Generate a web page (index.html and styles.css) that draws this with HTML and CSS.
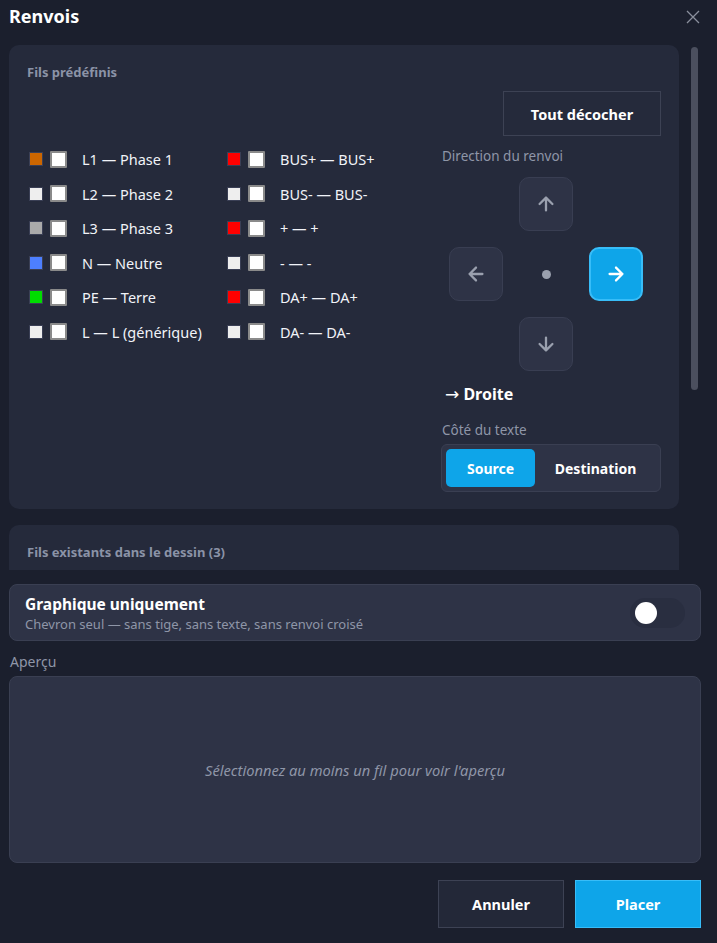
FILE: index.html
```html
<!DOCTYPE html>
<html lang="fr">
<head>
    <meta charset="UTF-8">
    <meta name="viewport" content="width=device-width, initial-scale=1.0">
    <title>Renvois</title>
    <link rel="stylesheet" href="styles.css">
</head>
<body>
    <div class="dialog">
        <header class="dialog-header">
            <h1>Renvois</h1>
            <button class="close-button" title="Fermer">
                <svg width="16" height="16" viewBox="0 0 16 16"><path d="M2 2 L14 14 M14 2 L2 14" stroke="currentColor" stroke-width="1.3" fill="none"/></svg>
            </button>
        </header>

        <div class="scroll-area">
            <div class="scroll-content">
                <section class="card">
                    <h2 class="card-title">Fils prédéfinis</h2>
                    <div class="card-body">
                        <div class="wire-grid">
                            <label class="wire"><span class="swatch" style="background:#cc6600"></span><span class="check"></span>L1 — Phase 1</label>
                            <label class="wire"><span class="swatch" style="background:#ff0000"></span><span class="check"></span>BUS+ — BUS+</label>
                            <label class="wire"><span class="swatch" style="background:#eeeeee"></span><span class="check"></span>L2 — Phase 2</label>
                            <label class="wire"><span class="swatch" style="background:#eeeeee"></span><span class="check"></span>BUS- — BUS-</label>
                            <label class="wire"><span class="swatch" style="background:#aaaaaa"></span><span class="check"></span>L3 — Phase 3</label>
                            <label class="wire"><span class="swatch" style="background:#ff0000"></span><span class="check"></span>+ — +</label>
                            <label class="wire"><span class="swatch" style="background:#4d7fff"></span><span class="check"></span>N — Neutre</label>
                            <label class="wire"><span class="swatch" style="background:#eeeeee"></span><span class="check"></span>- — -</label>
                            <label class="wire"><span class="swatch" style="background:#00dd00"></span><span class="check"></span>PE — Terre</label>
                            <label class="wire"><span class="swatch" style="background:#ff0000"></span><span class="check"></span>DA+ — DA+</label>
                            <label class="wire"><span class="swatch" style="background:#eeeeee"></span><span class="check"></span>L — L (générique)</label>
                            <label class="wire"><span class="swatch" style="background:#eeeeee"></span><span class="check"></span>DA- — DA-</label>
                        </div>

                        <div class="side-panel">
                            <button class="outline-button">Tout décocher</button>

                            <div class="field-label">Direction du renvoi</div>
                            <div class="dpad">
                                <button class="dir-button up">
                                    <svg viewBox="0 0 24 24"><path d="M12 19V5M5 12l7-7 7 7"/></svg>
                                </button>
                                <button class="dir-button left">
                                    <svg viewBox="0 0 24 24"><path d="M19 12H5M12 19l-7-7 7-7"/></svg>
                                </button>
                                <span class="dpad-dot"></span>
                                <button class="dir-button right active">
                                    <svg viewBox="0 0 24 24"><path d="M5 12h14M12 5l7 7-7 7"/></svg>
                                </button>
                                <button class="dir-button down">
                                    <svg viewBox="0 0 24 24"><path d="M12 5v14M19 12l-7 7-7-7"/></svg>
                                </button>
                            </div>
                            <div class="direction-value"><span class="arrow-glyph">→</span> Droite</div>

                            <div class="field-label">Côté du texte</div>
                            <div class="segmented">
                                <button class="segment selected">Source</button>
                                <button class="segment">Destination</button>
                            </div>
                        </div>
                    </div>
                </section>

                <section class="card card-existing">
                    <h2 class="card-title">Fils existants dans le dessin (3)</h2>
                </section>
            </div>
            <div class="scrollbar-thumb"></div>
        </div>

        <div class="option-row">
            <div>
                <div class="option-title">Graphique uniquement</div>
                <div class="option-hint">Chevron seul — sans tige, sans texte, sans renvoi croisé</div>
            </div>
            <span class="toggle"><span class="toggle-thumb"></span></span>
        </div>

        <div class="preview-label">Aperçu</div>
        <div class="preview">
            <em>Sélectionnez au moins un fil pour voir l'aperçu</em>
        </div>

        <footer class="dialog-footer">
            <button class="footer-button">Annuler</button>
            <button class="footer-button primary">Placer</button>
        </footer>
    </div>
</body>
</html>
```

FILE: styles.css
```css
body {
    margin: 0;
    background-color: #1b1f2d;
    color: #f1f3f8;
    font-family: "Noto Sans", "Open Sans", sans-serif;
}

button {
    font-family: inherit;
    cursor: pointer;
}

.dialog {
    padding: 0 16px 15px 9px;
}

/* Title bar */
.dialog-header {
    height: 45px;
    display: flex;
    align-items: flex-start;
    justify-content: space-between;
}

.dialog-header h1 {
    margin: 4px 0 0 0;
    font-size: 18px;
    font-weight: 700;
    color: #ffffff;
}

.close-button {
    margin: 9px 0 0 0;
    padding: 0;
    background: none;
    border: none;
    color: #8a8f9c;
}

/* Scrolling block with both cards */
.scroll-area {
    height: 525px;
    display: flex;
    gap: 12px;
    overflow: hidden;
}

.scroll-content {
    width: 670px;
    flex-shrink: 0;
}

.scrollbar-thumb {
    width: 7px;
    height: 343px;
    margin-top: 2px;
    background-color: #4b4f5e;
    border-radius: 4px;
}

.card {
    box-sizing: border-box;
    background-color: #252a3b;
    border-radius: 10px;
    padding: 18px 18px 17px 18px;
    margin-bottom: 16px;
}

.card-title {
    margin: 0;
    font-size: 13px;
    font-weight: 700;
    color: #8b93a7;
}

.card-existing {
    min-height: 300px;
    margin-bottom: 0;
}

.card-body {
    display: flex;
    justify-content: space-between;
}

/* Predefined wires */
.wire-grid {
    margin-top: 67px;
    display: grid;
    grid-template-columns: 198px 200px;
    row-gap: 12px;
    align-content: start;
    padding-left: 2px;
}

.wire {
    display: flex;
    align-items: center;
    height: 22.5px;
    font-size: 14.5px;
    color: #f1f3f8;
    white-space: nowrap;
}

.swatch {
    width: 12px;
    height: 12px;
    border: 1px solid #3a3f55;
    margin-right: 7px;
}

.check {
    width: 13px;
    height: 13px;
    background-color: #ffffff;
    border: 2px solid #8a8a8a;
    border-radius: 1px;
    margin-right: 15px;
}

/* Right hand column */
.side-panel {
    width: 220px;
    margin-top: 10px;
    display: flex;
    flex-direction: column;
}

.outline-button {
    align-self: flex-end;
    width: 158px;
    height: 45px;
    background-color: #252a3b;
    border: 1px solid #3d4254;
    color: #ffffff;
    font-size: 14.5px;
    font-weight: 700;
}

.field-label {
    margin-top: 11px;
    margin-left: 1px;
    font-size: 13.5px;
    color: #8f96a8;
}

.dpad {
    display: grid;
    grid-template-columns: repeat(3, 54px);
    grid-template-rows: repeat(3, 54px);
    column-gap: 16px;
    row-gap: 16px;
    margin: 12px 0 0 8px;
}

.dir-button {
    width: 54px;
    height: 54px;
    padding: 0;
    background-color: #2e3346;
    border: 1px solid #393e52;
    border-radius: 10px;
    display: flex;
    align-items: center;
    justify-content: center;
}

.dir-button svg {
    width: 22px;
    height: 22px;
    fill: none;
    stroke: #9aa0ae;
    stroke-width: 2.5;
    stroke-linecap: round;
    stroke-linejoin: round;
}

.dir-button.up { grid-column: 2; grid-row: 1; }
.dir-button.left { grid-column: 1; grid-row: 2; }
.dir-button.right { grid-column: 3; grid-row: 2; }
.dir-button.down { grid-column: 2; grid-row: 3; }

.dir-button.active {
    background-color: #0ea5e9;
    border: 2px solid #38bdf8;
}

.dir-button.active svg {
    stroke: #ffffff;
}

.dpad-dot {
    grid-column: 2;
    grid-row: 2;
    justify-self: center;
    align-self: center;
    width: 9px;
    height: 9px;
    border-radius: 50%;
    background-color: #9aa0ae;
}

.direction-value {
    margin: 12px 0 5px 4px;
    font-size: 16px;
    font-weight: 700;
    color: #ffffff;
}

.arrow-glyph {
    font-family: "DejaVu Sans", sans-serif;
    font-weight: 400;
    font-size: 17px;
}

.segmented {
    margin-top: 5px;
    display: flex;
    height: 48px;
    box-sizing: border-box;
    padding: 4px;
    background-color: #2e3346;
    border: 1px solid #3a3f52;
    border-radius: 6px;
}

.segment {
    border: none;
    border-radius: 5px;
    background: none;
    color: #ffffff;
    font-size: 14px;
    font-weight: 700;
    padding: 0;
}

.segment.selected {
    width: 89px;
    background-color: #0ea5e9;
}

.segment:not(.selected) {
    flex: 1;
}

/* Graphic only option */
.option-row {
    margin-top: 14px;
    height: 57px;
    box-sizing: border-box;
    padding: 0 15px;
    display: flex;
    align-items: center;
    justify-content: space-between;
    background-color: #2e3346;
    border: 1px solid #3a3f52;
    border-radius: 8px;
}

.option-title {
    font-size: 15.5px;
    font-weight: 700;
    color: #ffffff;
}

.option-hint {
    font-size: 13px;
    color: #8f96a8;
}

.toggle {
    width: 55px;
    height: 30px;
    box-sizing: border-box;
    padding: 4px 5px;
    background-color: #292e40;
    border-radius: 15px;
    display: flex;
    align-items: center;
}

.toggle-thumb {
    width: 22px;
    height: 22px;
    border-radius: 50%;
    background-color: #ffffff;
}

/* Preview */
.preview-label {
    margin: 11px 0 5px 1px;
    font-size: 14px;
    color: #8f96a8;
}

.preview {
    height: 187px;
    box-sizing: border-box;
    display: flex;
    align-items: center;
    justify-content: center;
    background-color: #2e3346;
    border: 1px solid #3a3f52;
    border-radius: 8px;
    font-size: 14.7px;
    color: #8f96a8;
}

/* Footer buttons */
.dialog-footer {
    margin-top: 17px;
    display: flex;
    justify-content: flex-end;
    gap: 11px;
}

.footer-button {
    width: 126px;
    height: 48px;
    background-color: #232838;
    border: 1px solid #3d4254;
    color: #ffffff;
    font-size: 14.5px;
    font-weight: 700;
}

.footer-button.primary {
    background-color: #0ea5e9;
    border-color: #38bdf8;
}
```
